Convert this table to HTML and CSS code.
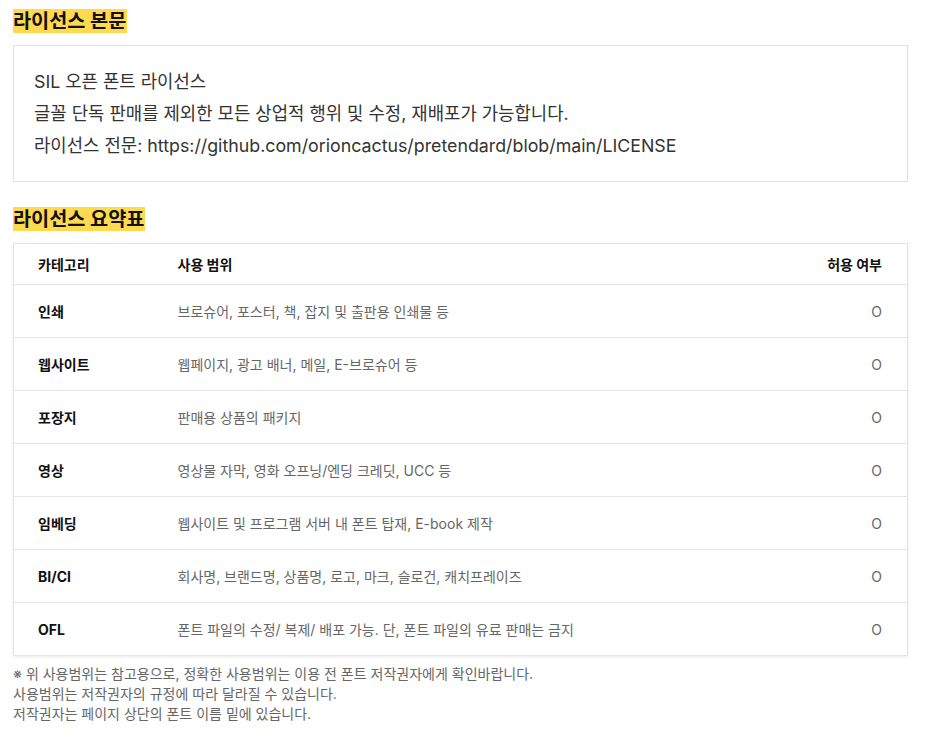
FILE: index.html
```html
<!DOCTYPE html>
<html lang="ko">
<head>
<meta charset="utf-8">
<link rel="stylesheet" href="styles.css">
</head>
<body>
<section class="section">
  <h2 class="title"><span class="hl">라이선스 본문</span></h2>
  <div class="license-box">
    <p>SIL 오픈 폰트 라이선스</p>
    <p>글꼴 단독 판매를 제외한 모든 상업적 행위 및 수정, 재배포가 가능합니다.</p>
    <p>라이선스 전문: https://github.com/orioncactus/pretendard/blob/main/LICENSE</p>
  </div>
</section>
<section class="section">
  <h2 class="title"><span class="hl">라이선스 요약표</span></h2>
  <table class="summary">
    <thead>
      <tr><th class="c1">카테고리</th><th class="c2">사용 범위</th><th class="c3">허용 여부</th></tr>
    </thead>
    <tbody>
      <tr><td class="c1">인쇄</td><td class="c2">브로슈어, 포스터, 책, 잡지 및 출판용 인쇄물 등</td><td class="c3">O</td></tr>
      <tr><td class="c1">웹사이트</td><td class="c2">웹페이지, 광고 배너, 메일, E-브로슈어 등</td><td class="c3">O</td></tr>
      <tr><td class="c1">포장지</td><td class="c2">판매용 상품의 패키지</td><td class="c3">O</td></tr>
      <tr><td class="c1">영상</td><td class="c2">영상물 자막, 영화 오프닝/엔딩 크레딧, UCC 등</td><td class="c3">O</td></tr>
      <tr><td class="c1">임베딩</td><td class="c2">웹사이트 및 프로그램 서버 내 폰트 탑재, E-book 제작</td><td class="c3">O</td></tr>
      <tr><td class="c1">BI/CI</td><td class="c2">회사명, 브랜드명, 상품명, 로고, 마크, 슬로건, 캐치프레이즈</td><td class="c3">O</td></tr>
      <tr><td class="c1">OFL</td><td class="c2">폰트 파일의 수정/ 복제/ 배포 가능. 단, 폰트 파일의 유료 판매는 금지</td><td class="c3">O</td></tr>
    </tbody>
  </table>
  <div class="notes">
    <p>※ 위 사용범위는 참고용으로, 정확한 사용범위는 이용 전 폰트 저작권자에게 확인바랍니다.</p>
    <p>사용범위는 저작권자의 규정에 따라 달라질 수 있습니다.</p>
    <p>저작권자는 페이지 상단의 폰트 이름 밑에 있습니다.</p>
  </div>
</section>
</body>
</html>
```
FILE: styles.css
```css
* { box-sizing: border-box; }
html, body { margin: 0; padding: 0; background: #fff; }
body {
  padding: 9px 23px 0 13px;
  font-family: Inter, "Noto Sans CJK KR", sans-serif;
  color: #222;
}
p { margin: 0; }
.section + .section { margin-top: 25px; }
.title {
  margin: 0 0 12px;
  font-size: 19.7px;
  line-height: 24px;
  font-weight: 700;
  color: #111;
}
.hl {
  background: #ffd94f;
  display: inline-block;
  padding: 0 1px 0 0;
}
.license-box {
  border: 1px solid #e2e2e2;
  padding: 20px 20px 19px 20px;
  font-size: 17.8px;
  line-height: 32px;
  color: #333;
}
.summary {
  width: 100%;
  border-collapse: collapse;
  border: 1px solid #e4e4e4;
  box-shadow: 0 1px 3px rgba(0,0,0,0.08);
  font-size: 14px;
}
.summary th {
  height: 41px;
  font-weight: 700;
  color: #111;
  text-align: left;
  border-bottom: 1px solid #e4e4e4;
}
.summary td {
  height: 53px;
  border-bottom: 1px solid #e4e4e4;
  color: #666;
}
.summary td.c1 { font-weight: 700; color: #111; }
.c1 { padding-left: 24px; width: 164px; }
.c2 { padding-left: 0; }
.summary .c3 { text-align: right; padding-right: 25px; width: 120px; }
.summary td.c3 { color: #666; font-size: 14px; }
.notes {
  margin-top: 8px;
  font-size: 14px;
  line-height: 20px;
  color: #666;
}
```
